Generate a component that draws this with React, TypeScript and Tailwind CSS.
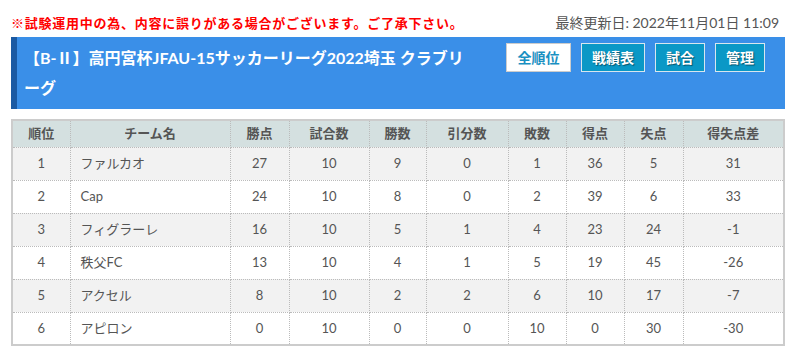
import React from 'react';

type Row = {
  rank: number;
  team: string;
  pts: number;
  played: number;
  win: number;
  draw: number;
  lose: number;
  gf: number;
  ga: number;
  gd: number;
};

const ROWS: Row[] = [
  { rank: 1, team: 'ファルカオ', pts: 27, played: 10, win: 9, draw: 0, lose: 1, gf: 36, ga: 5, gd: 31 },
  { rank: 2, team: 'Cap', pts: 24, played: 10, win: 8, draw: 0, lose: 2, gf: 39, ga: 6, gd: 33 },
  { rank: 3, team: 'フィグラーレ', pts: 16, played: 10, win: 5, draw: 1, lose: 4, gf: 23, ga: 24, gd: -1 },
  { rank: 4, team: '秩父FC', pts: 13, played: 10, win: 4, draw: 1, lose: 5, gf: 19, ga: 45, gd: -26 },
  { rank: 5, team: 'アクセル', pts: 8, played: 10, win: 2, draw: 2, lose: 6, gf: 10, ga: 17, gd: -7 },
  { rank: 6, team: 'アピロン', pts: 0, played: 10, win: 0, draw: 0, lose: 10, gf: 0, ga: 30, gd: -30 },
];

const HEADERS = [
  { label: '順位', w: 'w-[58px]' },
  { label: 'チーム名', w: 'w-[160px]' },
  { label: '勝点', w: 'w-[59px]' },
  { label: '試合数', w: 'w-[80px]' },
  { label: '勝数', w: 'w-[57px]' },
  { label: '引分数', w: 'w-[82px]' },
  { label: '敗数', w: 'w-[58px]' },
  { label: '得点', w: 'w-[58px]' },
  { label: '失点', w: 'w-[59px]' },
  { label: '得失点差', w: '' },
];

const cell = 'border border-dotted border-[#bbb] text-center';

const App: React.FC = () => {
  return (
    <div className="w-[794px] h-[356px] bg-white pl-[11px] pr-[9px] pt-[13px] font-['Lato','Noto_Sans_CJK_JP',sans-serif] text-[#555]">
      {/* notice line */}
      <div className="flex justify-between items-end h-[19px] pr-[6px]">
        <span className="text-[13px] leading-[18px] font-bold text-[#ff0000] tracking-[0.75px]">
          ※試験運用中の為、内容に誤りがある場合がございます。ご了承下さい。
        </span>
        <span className="text-[14px] leading-[18px] text-[#555]">最終更新日: 2022年11月01日 11:09</span>
      </div>

      {/* title bar */}
      <div className="mt-[5px] h-[72px] bg-[#3a8fe8] border-l-[6px] border-[#1b5aa3] flex justify-between items-start pl-[7px] pr-[20px] pt-[6px]">
        <h1 className="w-[450px] text-[16px] leading-[30px] font-bold text-white">
          【B-Ⅱ】高円宮杯JFAU-15サッカーリーグ2022埼玉 クラブリーグ
        </h1>
        <div className="flex gap-[10px] text-[14px] font-bold">
          <button className="w-[65px] h-[29px] bg-white text-[#1a90c2] border border-[#ccc]">全順位</button>
          <button className="w-[64px] h-[29px] bg-[#0a98c6] text-white border border-[#d8e6ee] [text-shadow:1px_1px_1px_rgba(0,0,0,0.45)]">戦績表</button>
          <button className="w-[50px] h-[29px] bg-[#0a98c6] text-white border border-[#d8e6ee] [text-shadow:1px_1px_1px_rgba(0,0,0,0.45)]">試合</button>
          <button className="w-[50px] h-[29px] bg-[#0a98c6] text-white border border-[#d8e6ee] [text-shadow:1px_1px_1px_rgba(0,0,0,0.45)]">管理</button>
        </div>
      </div>

      {/* standings table */}
      <table className="mt-[10px] w-[774px] border-collapse border-2 border-solid border-[#ccc] text-[13px] table-fixed">
        <thead>
          <tr className="h-[27px] bg-[#d4e0e0]">
            {HEADERS.map((h) => (
              <th key={h.label} className={`${cell} ${h.w} font-bold text-[#555]`}>
                {h.label}
              </th>
            ))}
          </tr>
        </thead>
        <tbody>
          {ROWS.map((r, i) => (
            <tr key={r.rank} className={`h-[33px] ${i % 2 === 0 ? 'bg-[#f2f2f2]' : 'bg-white'}`}>
              <td className={cell}>{r.rank}</td>
              <td className={`${cell} text-left pl-[10px]`}>{r.team}</td>
              <td className={cell}>{r.pts}</td>
              <td className={cell}>{r.played}</td>
              <td className={cell}>{r.win}</td>
              <td className={cell}>{r.draw}</td>
              <td className={cell}>{r.lose}</td>
              <td className={cell}>{r.gf}</td>
              <td className={cell}>{r.ga}</td>
              <td className={cell}>{r.gd}</td>
            </tr>
          ))}
        </tbody>
      </table>
    </div>
  );
};

export default App;
